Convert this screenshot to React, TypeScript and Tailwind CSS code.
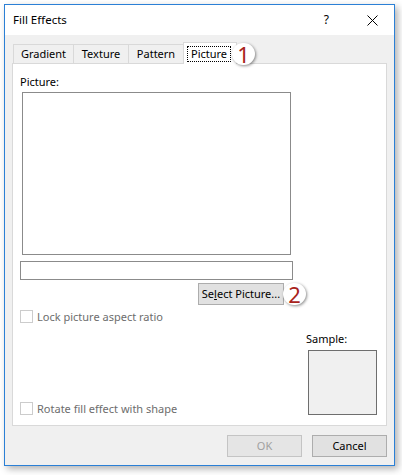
import React from "react";

function Badge({ n }: { n: string }) {
  return (
    <div className="w-[23px] h-[22px] rounded-full bg-white shadow-[1px_1px_3px_rgba(0,0,0,0.45)] flex items-center justify-center">
      <span className="text-[22px] leading-none text-[#a8231c] font-['Noto_Sans',sans-serif] mt-[-1px]">
        {n}
      </span>
    </div>
  );
}

function Checkbox({ label }: { label: string }) {
  return (
    <div className="flex items-center gap-[4px] h-[13px]">
      <div className="w-[13px] h-[13px] border border-[#cccccc] bg-white" />
      <span className="text-[#6d6d6d] leading-[16px] whitespace-nowrap">{label}</span>
    </div>
  );
}

export default function App() {
  const tabs = ["Gradient", "Texture", "Pattern"];
  const widths = ["w-[60px]", "w-[55px]", "w-[55px]"];

  return (
    <div className="w-[402px] h-[475px] bg-white pt-[4px] pl-[4px] font-['Segoe_UI','Noto_Sans',sans-serif] text-[11px] text-black">
      <div className="w-[391px] h-[462px] border border-[#2b80d6] bg-[#f0f0f0] flex flex-col shadow-[3px_3px_7px_rgba(0,0,0,0.3)]">
        {/* title bar */}
        <div className="h-[30px] bg-white flex items-center pl-[8px] pr-[16px] shrink-0">
          <span className="text-[11.5px] leading-[16px]">Fill Effects</span>
          <div className="ml-auto flex items-center gap-[38px]">
            <span className="text-[12px] leading-[16px]">?</span>
            <svg width="11" height="11" viewBox="0 0 11 11">
              <path d="M0.5 0.5 L10.5 10.5 M10.5 0.5 L0.5 10.5" stroke="#000" strokeWidth="1" />
            </svg>
          </div>
        </div>

        {/* body */}
        <div className="flex-1 px-[7px] pt-[7px] flex flex-col">
          <div className="relative flex items-end h-[21px] pl-[1px]">
            {tabs.map((t, i) => (
              <div
                key={t}
                className={`${widths[i]} h-[19px] border-t border-l border-[#d9d9d9] flex items-center justify-center leading-[16px]`}
              >
                {t}
              </div>
            ))}
            <div className="relative z-10 w-[54px] h-[22px] mb-[-1px] bg-white border border-b-0 border-[#d9d9d9] flex items-start justify-start pl-[3px] pt-[3px]">
              <span className="border border-dotted border-black px-[3px] leading-[14px]">Picture</span>
            </div>
            <div className="absolute z-20 left-[220px] top-[1px]">
              <Badge n="1" />
            </div>
          </div>

          <div className="w-[375px] h-[363px] border border-[#d9d9d9] bg-white pl-[7px] pt-[10px] flex flex-col">
            <span className="leading-[16px]">Picture:</span>
            <div className="ml-[2px] mt-[2px] w-[269px] h-[163px] border border-[#8b8b8b]" />
            <div className="mt-[6px] w-[273px] h-[19px] border border-[#8b8b8b]" />
            <div className="relative mt-[3px] ml-[178px] w-[86px] h-[22px]">
              <div className="w-[86px] h-[22px] bg-[#e1e1e1] border border-[#adadad] flex items-center justify-center leading-[16px] whitespace-nowrap">
                <span>
                  Se<span className="underline">l</span>ect Picture...
                </span>
              </div>
              <div className="absolute left-[85px] top-[0px]">
                <Badge n="2" />
              </div>
            </div>

            <div className="mt-[5px] h-[105px] flex">
              <div className="flex-1 flex flex-col justify-between">
                <Checkbox label="Lock picture aspect ratio" />
                <Checkbox label="Rotate fill effect with shape" />
              </div>
              <div className="w-[71px] mr-[9px] flex flex-col justify-end">
                <span className="leading-[16px] mb-[3px]">Sample:</span>
                <div className="ml-[2px] w-[69px] h-[65px] border border-[#6e6e6e] bg-[#f0f0f0]" />
              </div>
            </div>
          </div>

          <div className="mt-[9px] flex justify-end gap-[10px]">
            <div className="w-[75px] h-[22px] bg-[#e5e5e5] border border-[#c4c4c4] flex items-center justify-center text-[#a0a0a0] leading-[16px]">
              OK
            </div>
            <div className="w-[75px] h-[22px] bg-[#e1e1e1] border border-[#adadad] flex items-center justify-center leading-[16px]">
              Cancel
            </div>
          </div>
        </div>
      </div>
    </div>
  );
}
